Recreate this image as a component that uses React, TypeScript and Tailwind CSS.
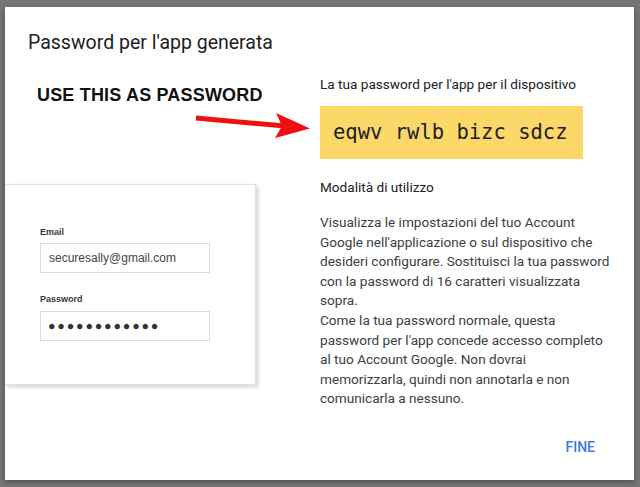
import React from 'react';

const steps = [
  'Visualizza le impostazioni del tuo Account Google nell\'applicazione o sul dispositivo che desideri configurare. Sostituisci la tua password con la password di 16 caratteri visualizzata sopra.',
  'Come la tua password normale, questa password per l\'app concede accesso completo al tuo Account Google. Non dovrai memorizzarla, quindi non annotarla e non comunicarla a nessuno.',
];

function Arrow() {
  return (
    <svg width="120" height="34" viewBox="0 0 120 34" className="block">
      <line x1="3" y1="10" x2="92" y2="18" stroke="#f01010" strokeWidth="5" />
      <polygon points="83,5 117,20.5 82,30 89,18" fill="#f01010" />
    </svg>
  );
}

function LoginCard() {
  return (
    <div className="w-[251px] h-[201px] bg-white border border-[#e2e2e2] border-l-0 shadow-[2px_2px_4px_rgba(0,0,0,0.18)] pt-[41px] pl-[35px] font-['Liberation_Sans',Arial,sans-serif]">
      <div className="text-[9px] leading-[12px] font-bold text-[#3a3a3a]">Email</div>
      <div className="mt-[5px] w-[170px] h-[30px] border border-[#dcdcdc] flex items-center pl-[8px] text-[12px] text-[#444]">
        securesally@gmail.com
      </div>
      <div className="mt-[20px] text-[9px] leading-[12px] font-bold text-[#3a3a3a]">Password</div>
      <div className="mt-[6px] w-[170px] h-[30px] border border-[#dcdcdc] flex items-center pl-[7px] text-[12.5px] tracking-[1.8px] text-[#333]">
        ●●●●●●●●●●●●
      </div>
    </div>
  );
}

export default function App() {
  return (
    <div className="w-[640px] h-[487px] bg-[#767676] pt-[7px] pl-[5px] overflow-hidden">
      <div className="w-[629px] h-[473px] bg-white shadow-[0_2px_6px_rgba(0,0,0,0.35)] flex flex-col font-['Roboto',Arial,sans-serif]">
        <h2 className="pt-[22px] pl-[23px] text-[19.5px] leading-[28px] text-[#202124]">
          Password per l'app generata
        </h2>

        <div className="flex mt-[17px]">
          {/* left: illustration */}
          <div className="w-[315px]">
            <div className="mt-[10px] ml-[32px] text-[18px] leading-[22px] font-bold tracking-[0.01em] text-[#111] font-['Liberation_Sans',Arial,sans-serif]">
              USE THIS AS PASSWORD
            </div>
            <div className="ml-[188px] mt-[2px]">
              <Arrow />
            </div>
            <div className="mt-[42px]">
              <LoginCard />
            </div>
          </div>

          {/* right: password + instructions */}
          <div className="w-[294px] text-[13.6px]">
            <p className="leading-[20px] text-[#202124]">La tua password per l'app per il dispositivo</p>
            <div className="mt-[12px] w-[263px] h-[53px] bg-[#fcd869] flex items-center pl-[13px] font-['DejaVu_Sans_Mono',monospace] text-[20.5px] text-[#202124]">
              eqwv rwlb bizc sdcz
            </div>
            <p className="mt-[18px] leading-[20px] text-[#202124]">Modalità di utilizzo</p>
            <div className="mt-[16px] leading-[19.6px] text-[#3c4043]">
              {steps.map((s) => (
                <p key={s}>{s}</p>
              ))}
            </div>
          </div>
        </div>

        <div className="mt-auto flex justify-end pr-[39px] pb-[23px]">
          <button className="text-[14px] leading-[20px] font-medium text-[#3b78e7]">FINE</button>
        </div>
      </div>
    </div>
  );
}
